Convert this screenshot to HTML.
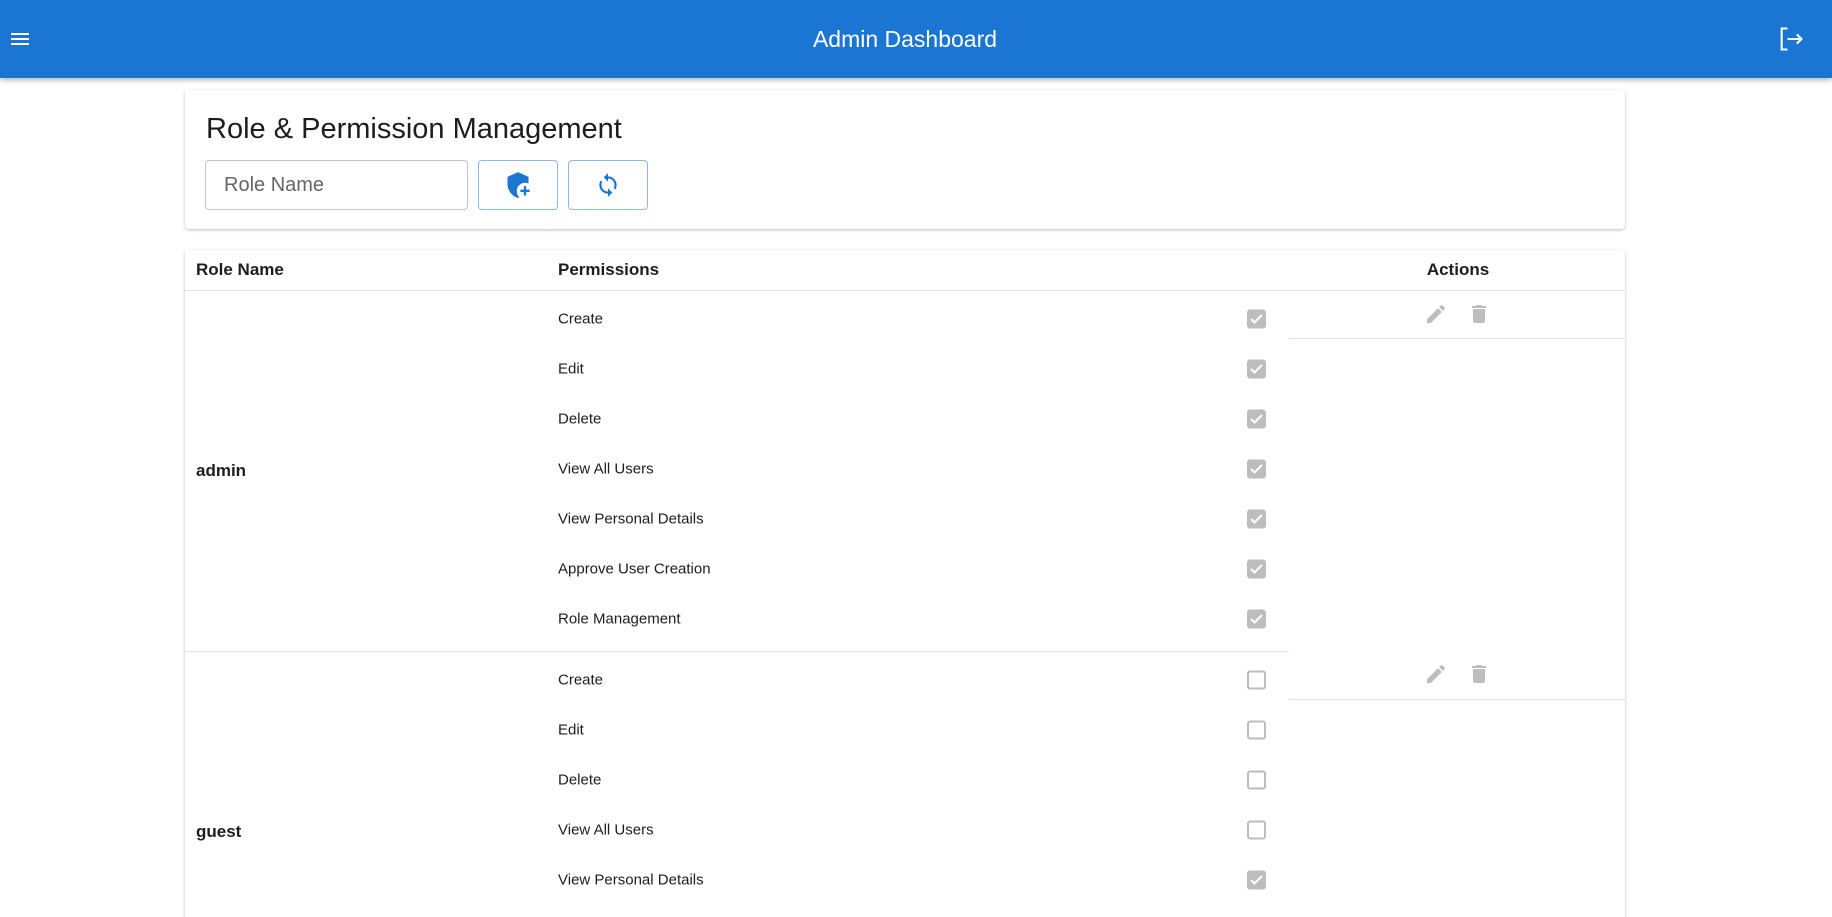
<!DOCTYPE html>
<html><head><meta charset="utf-8"><style>
*{margin:0;padding:0;box-sizing:border-box}
html,body{width:1832px;height:917px;overflow:hidden}
body{background:#fff;font-family:"Liberation Sans",Roboto,sans-serif;color:#1d1d1d;position:relative}
.a{position:absolute}
.hdr{left:0;top:0;width:1832px;height:78px;background:#1a76d2;box-shadow:0 2px 5px rgba(0,0,0,.3);z-index:2}
.card{background:#fff;border-radius:4px;box-shadow:0 1px 3px rgba(0,0,0,.25)}
.p{font-size:15px;left:558px;transform:translateY(-50%)}
.cb{left:1247px;width:19px;height:19px;border-radius:3px;transform:translateY(-50%)}
.on{background:#bdbdbd}
.off{border:2px solid #bdbdbd}
.ln{height:1px;background:#e0e0e0}
.lab{font-weight:bold;font-size:17px;left:196px;transform:translateY(-50%)}
</style></head><body>
<div class="a hdr">
<svg class="a" style="left:8px;top:27px" width="24" height="24" viewBox="0 0 24 24"><path fill="#fff" d="M3 18h18v-2H3v2zm0-5h18v-2H3v2zm0-7v2h18V6H3z"/></svg>
<div class="a" style="left:0;width:1810px;top:26px;text-align:center;color:#fff;font-size:23px">Admin Dashboard</div>
<svg class="a" style="left:1777px;top:25px" width="28" height="28" viewBox="0 0 24 24" fill="none" stroke="#fff" stroke-width="1.8"><path d="M9 3H4v18h5"/><path d="M9 12h12M17 8l4 4-4 4"/></svg>
</div>
<div class="a card" style="left:185px;top:90px;width:1440px;height:139px"></div>
<div class="a" style="left:206px;top:113px;font-size:29px">Role &amp; Permission Management</div>
<div class="a" style="left:205px;top:160px;width:263px;height:50px;border:1px solid #c4c4c4;border-radius:4px;font-size:20px;color:#666;padding:13px 18px">Role Name</div>
<div class="a" style="left:478px;top:160px;width:80px;height:50px;border:1px solid #8fb8e6;border-radius:4px"></div>
<svg class="a" style="left:504px;top:171px" width="28" height="28" viewBox="0 0 24 24"><path fill="#1a76d2" d="M12 1L3 5v6c0 5.5 3.8 10.7 9 12 .4-.1.8-.2 1.2-.4A7 7 0 0 1 11 17a7 7 0 0 1 10-6.3V5z"/><path fill="#1a76d2" d="M17 13v3h-3v2h3v3h2v-3h3v-2h-3v-3z"/></svg>
<div class="a" style="left:568px;top:160px;width:80px;height:50px;border:1px solid #8fb8e6;border-radius:4px"></div>
<svg class="a" style="left:595px;top:172px" width="26" height="26" viewBox="0 0 24 24"><path fill="#1a76d2" d="M12 4V1L8 5l4 4V6c3.3 0 6 2.7 6 6 0 1-.25 2-.7 2.8l1.46 1.46A7.9 7.9 0 0 0 20 12c0-4.4-3.6-8-8-8zm0 14c-3.3 0-6-2.7-6-6 0-1 .25-2 .7-2.8L5.24 7.74A7.9 7.9 0 0 0 4 12c0 4.4 3.6 8 8 8v3l4-4-4-4v3z"/></svg>

<div class="a card" style="left:185px;top:250px;width:1440px;height:680px"></div>
<div class="a" style="left:196px;top:260px;font-weight:bold;font-size:17px">Role Name</div>
<div class="a" style="left:558px;top:260px;font-weight:bold;font-size:17px">Permissions</div>
<div class="a" style="left:1400px;width:116px;text-align:center;top:260px;font-weight:bold;font-size:17px">Actions</div>
<div class="a ln" style="left:185px;top:290px;width:1440px"></div>

<div class="a lab" style="top:471px">admin</div>
<div class="a p" style="top:319px">Create</div><div class="a cb on" style="top:319px"></div>
<div class="a p" style="top:369px">Edit</div><div class="a cb on" style="top:369px"></div>
<div class="a p" style="top:419px">Delete</div><div class="a cb on" style="top:419px"></div>
<div class="a p" style="top:469px">View All Users</div><div class="a cb on" style="top:469px"></div>
<div class="a p" style="top:519px">View Personal Details</div><div class="a cb on" style="top:519px"></div>
<div class="a p" style="top:569px">Approve User Creation</div><div class="a cb on" style="top:569px"></div>
<div class="a p" style="top:619px">Role Management</div><div class="a cb on" style="top:619px"></div>
<div class="a ln" style="left:185px;top:651px;width:1104px"></div>
<div class="a ln" style="left:1289px;top:338px;width:336px"></div>

<div class="a lab" style="top:832px">guest</div>
<div class="a p" style="top:680px">Create</div><div class="a cb off" style="top:680px"></div>
<div class="a p" style="top:730px">Edit</div><div class="a cb off" style="top:730px"></div>
<div class="a p" style="top:780px">Delete</div><div class="a cb off" style="top:780px"></div>
<div class="a p" style="top:830px">View All Users</div><div class="a cb off" style="top:830px"></div>
<div class="a p" style="top:880px">View Personal Details</div><div class="a cb on" style="top:880px"></div>
<div class="a ln" style="left:1289px;top:699px;width:336px"></div>

<svg width="0" height="0" style="position:absolute"><defs>
<symbol id="ck" viewBox="0 0 19 19"><path d="M4 9.5l3.5 3.5L15 5.5" fill="none" stroke="#fff" stroke-width="2"/></symbol>
<symbol id="ed" viewBox="0 0 24 24"><path fill="#bdbdbd" d="M3 17.25V21h3.75L17.81 9.94l-3.75-3.75L3 17.25zM20.71 7.04a1 1 0 0 0 0-1.41l-2.34-2.34a1 1 0 0 0-1.41 0l-1.83 1.83 3.75 3.75 1.83-1.83z"/></symbol>
<symbol id="tr" viewBox="0 0 24 24"><path fill="#bdbdbd" d="M6 19c0 1.1.9 2 2 2h8c1.1 0 2-.9 2-2V7H6v12zM19 4h-3.5l-1-1h-5l-1 1H5v2h14V4z"/></symbol>
</defs></svg>
<svg class="a" style="left:1424px;top:302px" width="24" height="24"><use href="#ed"/></svg>
<svg class="a" style="left:1467px;top:302px" width="24" height="24"><use href="#tr"/></svg>
<svg class="a" style="left:1424px;top:662px" width="24" height="24"><use href="#ed"/></svg>
<svg class="a" style="left:1467px;top:662px" width="24" height="24"><use href="#tr"/></svg>
<script>
document.querySelectorAll('.cb.on').forEach(e=>{e.innerHTML='<svg width="19" height="19"><use href="#ck"/></svg>'});
</script>
</body></html>
